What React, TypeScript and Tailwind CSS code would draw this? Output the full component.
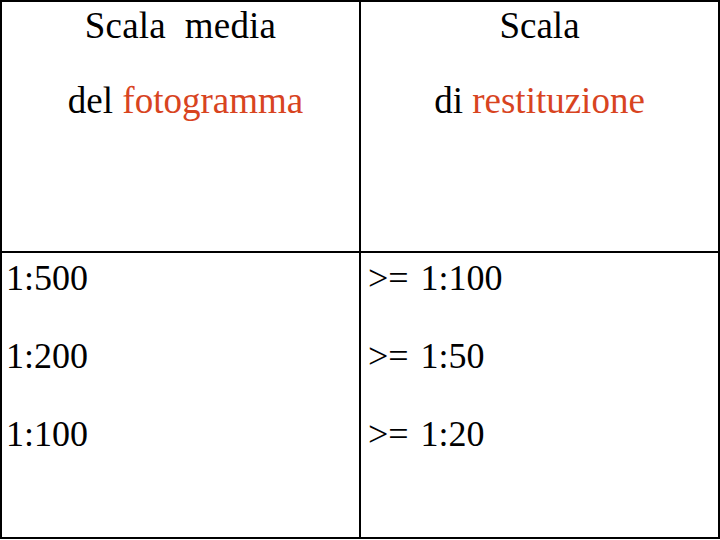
export default function App() {
  const rows = [
    ["1:500", "1:100"],
    ["1:200", "1:50"],
    ["1:100", "1:20"],
  ];
  return (
    <div
      className="w-[720px] h-[540px] bg-white text-black"
      style={{ fontFamily: '"Liberation Serif", "Times New Roman", serif' }}
    >
      <div className="w-[720px] h-[539px] border-2 border-black grid grid-cols-[359px_1fr] grid-rows-[251px_1fr]">
        <div className="border-r-2 border-b-2 border-black flex flex-col items-center text-[37px]">
          <div className="leading-[48px] h-[48px] whitespace-pre tracking-[0.2px]">Scala  media</div>
          <div className="leading-[48px] h-[48px] mt-[27px] pl-[10px]">
            del <span className="text-[#d8441f]">fotogramma</span>
          </div>
        </div>
        <div className="border-b-2 border-black flex flex-col items-center text-[37px]">
          <div className="leading-[48px] h-[48px]">Scala</div>
          <div className="leading-[48px] h-[48px] mt-[27px]">
            di <span className="text-[#d8441f]">restituzione</span>
          </div>
        </div>
        <div className="border-r-2 border-black flex flex-col gap-[28px] pl-[4px] text-[36px]">
          {rows.map((r, i) => (
            <div key={i} className="leading-[50px] h-[50px]">{r[0]}</div>
          ))}
        </div>
        <div className="flex flex-col gap-[28px] pl-[7px] text-[36px]">
          {rows.map((r, i) => (
            <div key={i} className="leading-[50px] h-[50px]">
              &gt;= <span className="ml-[3px]">{r[1]}</span>
            </div>
          ))}
        </div>
      </div>
    </div>
  );
}
